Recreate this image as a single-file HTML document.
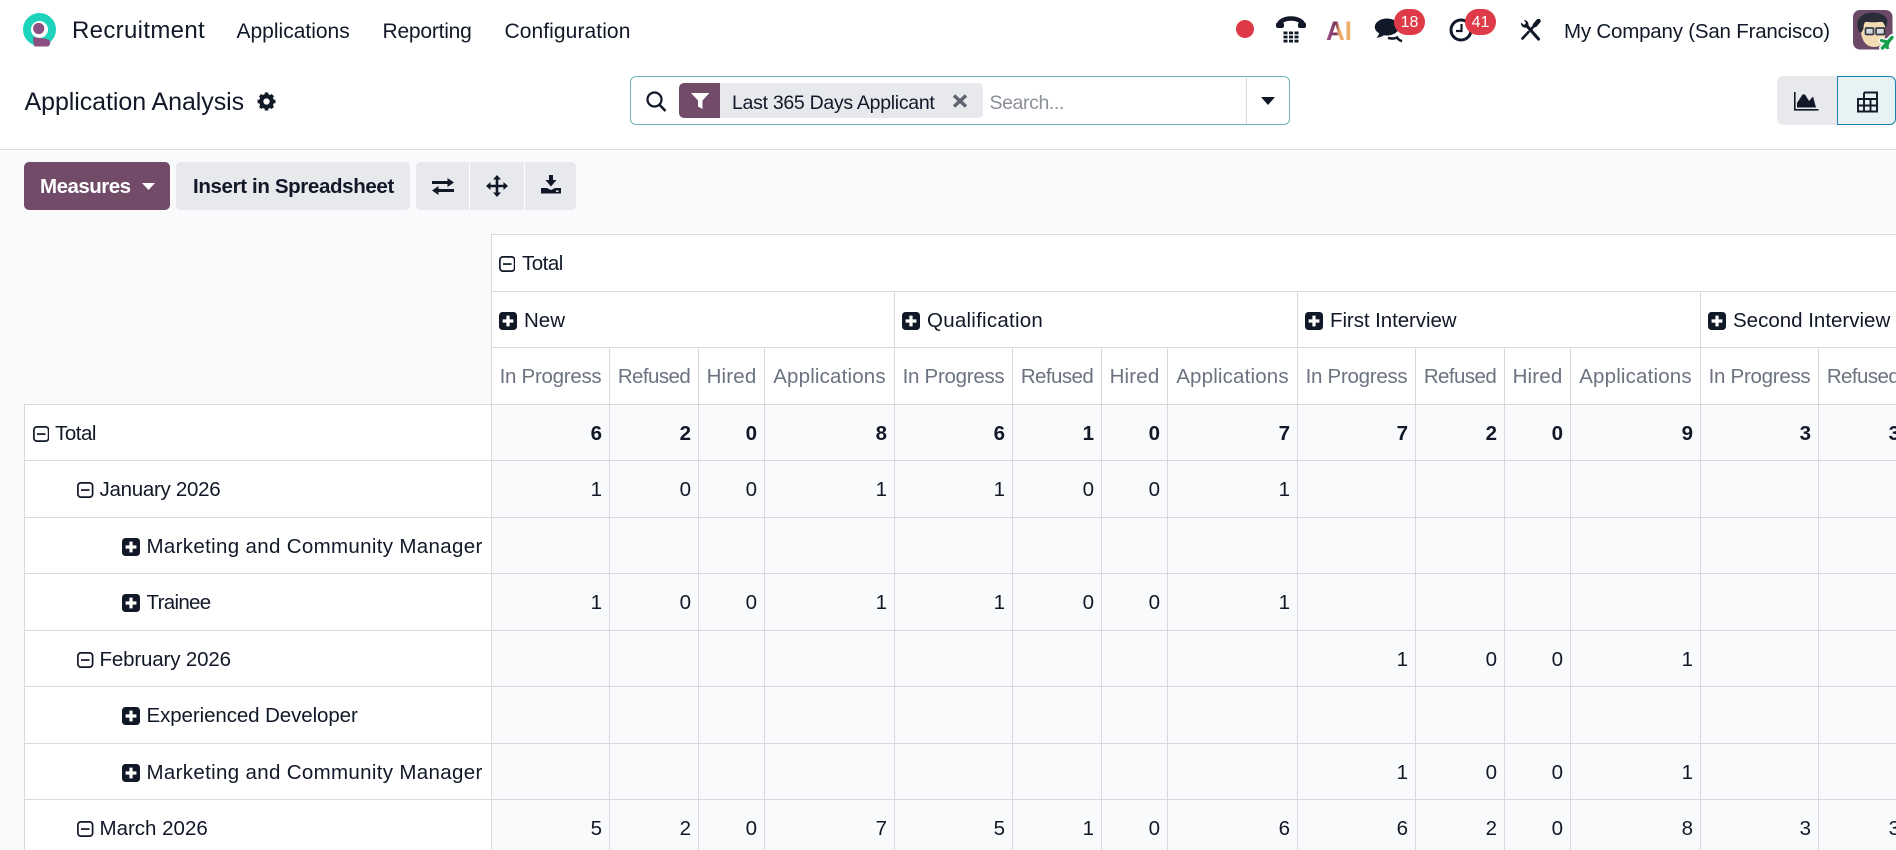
<!DOCTYPE html>
<html lang="en">
<head>
<meta charset="utf-8">
<title>Application Analysis</title>
<style>
html,body{margin:0;padding:0;width:1896px;height:850px;overflow:hidden;background:#f9fafb;font-family:"Liberation Sans",sans-serif;color:#111827;font-size:20px}
.a{position:absolute;white-space:nowrap;line-height:30px}
svg{display:block}
svg.i{position:absolute}
#top{position:absolute;left:0;top:0;width:1896px;height:149px;background:#fff;border-bottom:1px solid #d8dadd}
.btn{position:absolute;top:162px;height:48px;border-radius:5px;background:#e7e9ed}
.badge{position:absolute;top:9px;width:31px;height:26px;border-radius:13px;background:#df3a47;color:#fff;font-size:16px;line-height:28px;text-align:center}
#t{position:absolute;left:24px;top:234px;width:1872px;height:616px;overflow:hidden}
table{border-collapse:separate;border-spacing:0;table-layout:fixed;width:2080px}
th,td{box-sizing:border-box;padding:2.5px 0 0;border-right:1px solid #d8dadd;border-bottom:1px solid #d8dadd;font-size:20.5px;font-weight:400;overflow:hidden;white-space:nowrap}
thead th{background:#fff;text-align:left;padding-left:6.5px}
thead th.e{background:transparent;padding:0}
thead th.m{color:#6b7280;text-align:center;padding-left:0}
thead .pl{margin-right:7.5px}
thead .mi{margin-right:7px}
tr.h1 th{border-top:1px solid #d8dadd;height:58px}
tr.h1 th.e{border-top:0}
tr.h2 th{height:56px}
tr.h3 th{height:57px}
tbody th{background:#fff;border-left:1px solid #d8dadd;text-align:left}
tbody td{text-align:right;padding-right:7px}
tr.s th,tr.s td{height:56px}
tr.l th,tr.l td{height:57px}
tr.tot td{font-weight:700}
.c{display:inline-flex;align-items:center;line-height:30px}
.c svg{flex:none}
.mi{width:16.5px;height:16px;margin-right:6px}
.pl{width:18px;height:18px;margin-right:6.5px}
.d0{padding-left:7.6px}.d1{padding-left:52px}.d2{padding-left:97px}
.pro{letter-spacing:-.27px}.ref{letter-spacing:-.57px}.hir{letter-spacing:.16px}.app{letter-spacing:.17px}
</style>
</head>
<body>
<svg width="0" height="0" style="position:absolute">
<symbol id="minus" viewBox="0 0 16.5 16"><rect x=".9" y=".9" width="14.7" height="14.2" rx="3" fill="none" stroke="#111827" stroke-width="1.7"/><rect x="4" y="7.2" width="8.5" height="1.7" fill="#111827"/></symbol>
<symbol id="plus" viewBox="0 0 18 18"><rect width="18" height="18" rx="3.5" fill="#111827"/><path d="M9 3.6v10.8M3.6 9h10.8" stroke="#fff" stroke-width="3.2"/></symbol>
</svg>

<div id="top"></div>

<!-- logo -->
<svg class="i" style="left:22px;top:12px" width="36" height="36" viewBox="0 0 36 36">
<circle cx="17.500" cy="17.500" r="12.500" fill="none" stroke="#1dd3bb" stroke-width="8"/>
<circle cx="16.700" cy="16.500" r="5.600" fill="#8c4f81"/>
<path d="M11 25c4 .8 10 1 14.500 2.200 2.200.7 3 2 2.800 3.800-.2 1.500-1 3-2.300 3.500H12.500c-1-3-1.500-6-1.500-9.500z" fill="#8c4f81"/>
</svg>
<div class="a" style="left:72px;top:16px;font-size:24px;letter-spacing:.33px">Recruitment</div>
<div class="a" style="left:236.500px;top:17px;font-size:21px">Applications</div>
<div class="a" style="left:382.500px;top:17px;font-size:21px;letter-spacing:-.22px">Reporting</div>
<div class="a" style="left:504.500px;top:17px;font-size:21px;letter-spacing:.08px">Configuration</div>

<!-- systray -->
<svg class="i" style="left:1236px;top:20px" width="18" height="18"><circle cx="9" cy="9" r="9" fill="#de3a46"/></svg>
<svg class="i" style="left:1275px;top:15px" width="32" height="28" viewBox="0 0 32 28">
<path d="M3.500 11C4 6 10 3.500 16 3.500S28 6 28.500 11" fill="none" stroke="#111827" stroke-width="4.500"/>
<rect x="1" y="7.500" width="8" height="5.500" rx="2" fill="#111827"/><rect x="23" y="7.500" width="8" height="5.500" rx="2" fill="#111827"/>
<g fill="#111827"><rect x="8.500" y="16.500" width="4" height="2.800"/><rect x="14" y="16.500" width="4" height="2.800"/><rect x="19.500" y="16.500" width="4" height="2.800"/><rect x="8.500" y="20.600" width="4" height="2.800"/><rect x="14" y="20.600" width="4" height="2.800"/><rect x="19.500" y="20.600" width="4" height="2.800"/><rect x="8.500" y="24.700" width="4" height="2.800"/><rect x="14" y="24.700" width="4" height="2.800"/><rect x="19.500" y="24.700" width="4" height="2.800"/></g>
</svg>
<svg class="i" style="left:1326px;top:16px" width="28" height="28" viewBox="0 0 28 28">
<defs><linearGradient id="aig" x1="0" x2="1" y1="0" y2="0"><stop offset="0" stop-color="#a0558f"/><stop offset=".38" stop-color="#7b3357"/><stop offset=".52" stop-color="#eeae6a"/><stop offset="1" stop-color="#eeae6a"/></linearGradient></defs>
<text x="0" y="24" font-family="Liberation Sans" font-weight="700" font-size="27" fill="url(#aig)" textLength="26" lengthAdjust="spacingAndGlyphs">AI</text>
</svg>
<svg class="i" style="left:1374px;top:17px" width="30" height="26" viewBox="0 0 30 26">
<path d="M13 1.500c6.500 0 12 3.700 12 8.500s-5.500 8.500-12 8.500c-1.100 0-2.200-.1-3.200-.3-2 1.500-4.500 2.300-7.300 2.500 1.300-1.200 2.300-2.800 2.700-4.500C2.300 14.700.8 12.500.8 10 .8 5.200 6.500 1.500 13 1.500z" fill="#111827"/>
<path d="M14 20.800c3 1 6.500 1 9-.3 1 1.700 2.800 3 5 3.700" fill="none" stroke="#111827" stroke-width="2.600"/>
</svg>
<div class="badge" style="left:1394px">18</div>
<svg class="i" style="left:1449px;top:18px" width="24" height="24" viewBox="0 0 24 24">
<circle cx="12" cy="12" r="10" fill="none" stroke="#111827" stroke-width="3"/>
<path d="M12.500 6v7H7" fill="none" stroke="#111827" stroke-width="2.200"/>
</svg>
<div class="badge" style="left:1465px">41</div>
<svg class="i" style="left:1519px;top:19px" width="24" height="22" viewBox="0 0 24 22">
<path d="M8 7l11.500 13" stroke="#111827" stroke-width="3.200" stroke-linecap="round"/>
<path d="M2 3.500C1.500 7 4.500 9.500 8 8.500L9.500 6C9.800 3 7.500.8 5 1.200L7 4 5 6z" fill="#111827"/>
<path d="M3.500 19.500L9.500 13M12.800 9.500L14.500 7.500" stroke="#111827" stroke-width="2.600" stroke-linecap="round"/>
<path d="M16 6l3.500-4" stroke="#111827" stroke-width="4.500" stroke-linecap="round"/>
</svg>
<div class="a" style="left:1564px;top:17px;font-size:20.500px;letter-spacing:-.2px">My Company (San Francisco)</div>
<svg class="i" style="left:1853px;top:10px" width="43" height="42" viewBox="0 0 43 42">
<rect width="39.500" height="39.500" rx="7" fill="#6a4a66"/>
<path d="M8 20c0 10 5 17 13 17s11-6 11-12V12H9z" fill="#f3dcb2"/>
<path d="M5 19C2 9 9 3 19 2.500c8 0 15 3 15.500 9l-1.500 7c-1-3-2-5-4-7-6 1-12 1-16 0-2 1-2.500 4-2.500 7l-2 4c-2 0-3-1.500-3.500-3.500z" fill="#2a2d38"/>
<g fill="#d5d9da" stroke="#343a46" stroke-width="1.700"><rect x="12.500" y="18" width="8" height="6.500" rx="1"/><rect x="23" y="18" width="8.500" height="6.500" rx="1"/></g>
<path d="M29 38L39 27M28.500 30.500l7 1.500M32.500 37.500l.5-5M37 35l1-6" stroke="#fff" stroke-width="6" stroke-linecap="round"/>
<path d="M29.500 38L39 27.500" stroke="#14a04a" stroke-width="3.400" stroke-linecap="round"/>
<path d="M28.500 30.500l7 1.800M34 37.500l.8-6" stroke="#14a04a" stroke-width="3.200" stroke-linecap="round"/>
</svg>

<!-- control panel -->
<div class="a" style="left:24.500px;top:86.500px;font-size:25px;letter-spacing:-.07px">Application Analysis</div>
<svg class="i" style="left:256.500px;top:91.500px" width="19" height="19" viewBox="0 0 18 18">
<circle cx="9" cy="9" r="5" fill="none" stroke="#111827" stroke-width="4"/>
<g stroke="#111827" stroke-width="3.400"><path d="M9 .5v3M9 14.500v3M.5 9h3M14.500 9h3M3 3l2.200 2.200M12.800 12.800L15 15M15 3l-2.200 2.200M5.200 12.800L3 15"/></g>
</svg>

<div style="position:absolute;left:630px;top:76px;width:658px;height:47px;border:1px solid #6fb4bd;border-radius:6px;background:#fff"></div>
<div style="position:absolute;left:1246px;top:77px;width:1px;height:47px;background:#d8dadd"></div>
<svg class="i" style="left:645px;top:91px" width="23" height="21" viewBox="0 0 23 21">
<circle cx="9.500" cy="8.500" r="7" fill="none" stroke="#111827" stroke-width="2.200"/>
<path d="M14.500 13.800L20.500 20" stroke="#111827" stroke-width="2.500"/>
</svg>
<div style="position:absolute;left:679px;top:83px;width:304px;height:35px;border-radius:5px;background:#e7e9ed"></div>
<div style="position:absolute;left:679px;top:83px;width:41px;height:35px;border-radius:5px 0 0 5px;background:#714b67"></div>
<svg class="i" style="left:690.500px;top:93px" width="18.500" height="16" viewBox="0 0 18.500 16"><path d="M0 0h18.500l-7 7.500V16l-4.500-2.500V7.500z" fill="#fff"/></svg>
<div class="a" style="left:732px;top:88px;font-size:19.500px;letter-spacing:-.29px">Last 365 Days Applicant</div>
<svg class="i" style="left:952px;top:94px" width="16" height="14" viewBox="0 0 16 14"><path d="M2 1.500l12 11M14 1.500L2 12.500" stroke="#5f636f" stroke-width="3.400"/></svg>
<div class="a" style="left:989.500px;top:88px;font-size:19.500px;letter-spacing:-.4px;color:#8a8f98">Search...</div>
<svg class="i" style="left:1261px;top:97px" width="14" height="8"><path d="M0 0h14L7 8z" fill="#111827"/></svg>

<div style="position:absolute;left:1777px;top:76px;width:60px;height:49px;background:#e7e9ed;border-radius:6px 0 0 6px"></div>
<div style="position:absolute;left:1837px;top:76px;width:57px;height:47px;background:#e6f2f3;border:1px solid #1f7fae;border-radius:0 6px 6px 0"></div>
<svg class="i" style="left:1794px;top:92px" width="25" height="20" viewBox="0 0 25 20">
<path d="M.8 0v17.800h23.700" fill="none" stroke="#111827" stroke-width="1.600"/>
<path d="M3 15.500V11L8.500 2.500h2.500L15 9l4-4.500 3 11z" fill="#111827"/>
</svg>
<svg class="i" style="left:1857px;top:91px" width="21" height="22" viewBox="0 0 21 22">
<path d="M7 1.500h13v19H1V8h19M1 8h6V1.500M1 14.500h19M7 8v12.500M13.500 8v12.500" fill="none" stroke="#111827" stroke-width="1.900"/>
</svg>

<!-- toolbar -->
<div class="btn" style="left:24px;width:146px;background:#714b67"></div>
<div class="a" style="left:40px;top:172px;font-size:20.500px;font-weight:700;color:#fff;letter-spacing:-.5px">Measures</div>
<svg class="i" style="left:142px;top:183px" width="13" height="7"><path d="M0 0h13L6.500 7z" fill="#fff"/></svg>
<div class="btn" style="left:176px;width:234px"></div>
<div class="a" style="left:193px;top:172px;font-size:20.500px;font-weight:700;letter-spacing:-.36px">Insert in Spreadsheet</div>
<div class="btn" style="left:416px;width:160px"></div>
<div style="position:absolute;left:469px;top:162px;width:1px;height:48px;background:#fff"></div>
<div style="position:absolute;left:523.500px;top:162px;width:1px;height:48px;background:#fff"></div>
<svg class="i" style="left:432px;top:178px" width="22" height="17" viewBox="0 0 22 17">
<path d="M22 4.500l-6.500-4.500v9zM0 12.500l6.500-4.500v9z" fill="#111827"/>
<path d="M0 4.500h17M22 12.500H5" stroke="#111827" stroke-width="3"/>
</svg>
<svg class="i" style="left:486px;top:175px" width="22" height="22" viewBox="0 0 22 22">
<path d="M11 3v16M3 11h16" stroke="#111827" stroke-width="2.600"/>
<path d="M11 0l4 4.500H7zM11 22l4-4.500H7zM0 11l4.500-4v8zM22 11l-4.500-4v8z" fill="#111827"/>
</svg>
<svg class="i" style="left:541px;top:175px" width="20" height="19" viewBox="0 0 20 19">
<path d="M8 0h4v5h3.500L10 11.500 4.500 5H8z" fill="#111827"/>
<path d="M0 13h6l4 2 4-2h6v5.500H0z" fill="#111827"/><rect x="15" y="15.500" width="2.500" height="1.500" fill="#e7e9ed"/>
</svg>

<!-- pivot table -->
<div id="t">
<table>
<colgroup><col style="width:468px"><col style="width:118px"><col style="width:89px"><col style="width:66px"><col style="width:130px"><col style="width:118px"><col style="width:89px"><col style="width:66px"><col style="width:130px"><col style="width:118px"><col style="width:89px"><col style="width:66px"><col style="width:130px"><col style="width:118px"><col style="width:89px"><col style="width:66px"><col style="width:130px"></colgroup>
<thead>
<tr class="h1"><th class="e" rowspan="3"></th><th colspan="16"><span class="c"><svg class="mi"><use href="#minus"/></svg><span style="letter-spacing:-.5px">Total</span></span></th></tr>
<tr class="h2">
<th colspan="4"><span class="c"><svg class="pl"><use href="#plus"/></svg>New</span></th>
<th colspan="4"><span class="c"><svg class="pl"><use href="#plus"/></svg><span style="letter-spacing:.25px">Qualification</span></span></th>
<th colspan="4"><span class="c"><svg class="pl"><use href="#plus"/></svg><span style="letter-spacing:-.07px">First Interview</span></span></th>
<th colspan="4"><span class="c"><svg class="pl"><use href="#plus"/></svg>Second Interview</span></th>
</tr>
<tr class="h3">
<th class="m pro">In Progress</th><th class="m ref">Refused</th><th class="m hir">Hired</th><th class="m app">Applications</th>
<th class="m pro">In Progress</th><th class="m ref">Refused</th><th class="m hir">Hired</th><th class="m app">Applications</th>
<th class="m pro">In Progress</th><th class="m ref">Refused</th><th class="m hir">Hired</th><th class="m app">Applications</th>
<th class="m pro">In Progress</th><th class="m ref">Refused</th><th class="m hir">Hired</th><th class="m app">Applications</th>
</tr>
</thead>
<tbody>
<tr class="s tot"><th class="d0"><span class="c"><svg class="mi"><use href="#minus"/></svg><span style="letter-spacing:-.5px">Total</span></span></th><td>6</td><td>2</td><td>0</td><td>8</td><td>6</td><td>1</td><td>0</td><td>7</td><td>7</td><td>2</td><td>0</td><td>9</td><td>3</td><td>3</td><td></td><td></td></tr>
<tr class="l"><th class="d1"><span class="c"><svg class="mi"><use href="#minus"/></svg><span style="letter-spacing:-.28px">January 2026</span></span></th><td>1</td><td>0</td><td>0</td><td>1</td><td>1</td><td>0</td><td>0</td><td>1</td><td></td><td></td><td></td><td></td><td></td><td></td><td></td><td></td></tr>
<tr class="s"><th class="d2"><span class="c"><svg class="pl"><use href="#plus"/></svg><span style="letter-spacing:.33px">Marketing and Community Manager</span></span></th><td></td><td></td><td></td><td></td><td></td><td></td><td></td><td></td><td></td><td></td><td></td><td></td><td></td><td></td><td></td><td></td></tr>
<tr class="l"><th class="d2"><span class="c"><svg class="pl"><use href="#plus"/></svg><span style="letter-spacing:-.68px">Trainee</span></span></th><td>1</td><td>0</td><td>0</td><td>1</td><td>1</td><td>0</td><td>0</td><td>1</td><td></td><td></td><td></td><td></td><td></td><td></td><td></td><td></td></tr>
<tr class="s"><th class="d1"><span class="c"><svg class="mi"><use href="#minus"/></svg><span style="letter-spacing:-.15px">February 2026</span></span></th><td></td><td></td><td></td><td></td><td></td><td></td><td></td><td></td><td>1</td><td>0</td><td>0</td><td>1</td><td></td><td></td><td></td><td></td></tr>
<tr class="l"><th class="d2"><span class="c"><svg class="pl"><use href="#plus"/></svg><span style="letter-spacing:-.09px">Experienced Developer</span></span></th><td></td><td></td><td></td><td></td><td></td><td></td><td></td><td></td><td></td><td></td><td></td><td></td><td></td><td></td><td></td><td></td></tr>
<tr class="s"><th class="d2"><span class="c"><svg class="pl"><use href="#plus"/></svg><span style="letter-spacing:.33px">Marketing and Community Manager</span></span></th><td></td><td></td><td></td><td></td><td></td><td></td><td></td><td></td><td>1</td><td>0</td><td>0</td><td>1</td><td></td><td></td><td></td><td></td></tr>
<tr class="l"><th class="d1"><span class="c"><svg class="mi"><use href="#minus"/></svg>March 2026</span></th><td>5</td><td>2</td><td>0</td><td>7</td><td>5</td><td>1</td><td>0</td><td>6</td><td>6</td><td>2</td><td>0</td><td>8</td><td>3</td><td>3</td><td></td><td></td></tr>
</tbody>
</table>
</div>
</body>
</html>
